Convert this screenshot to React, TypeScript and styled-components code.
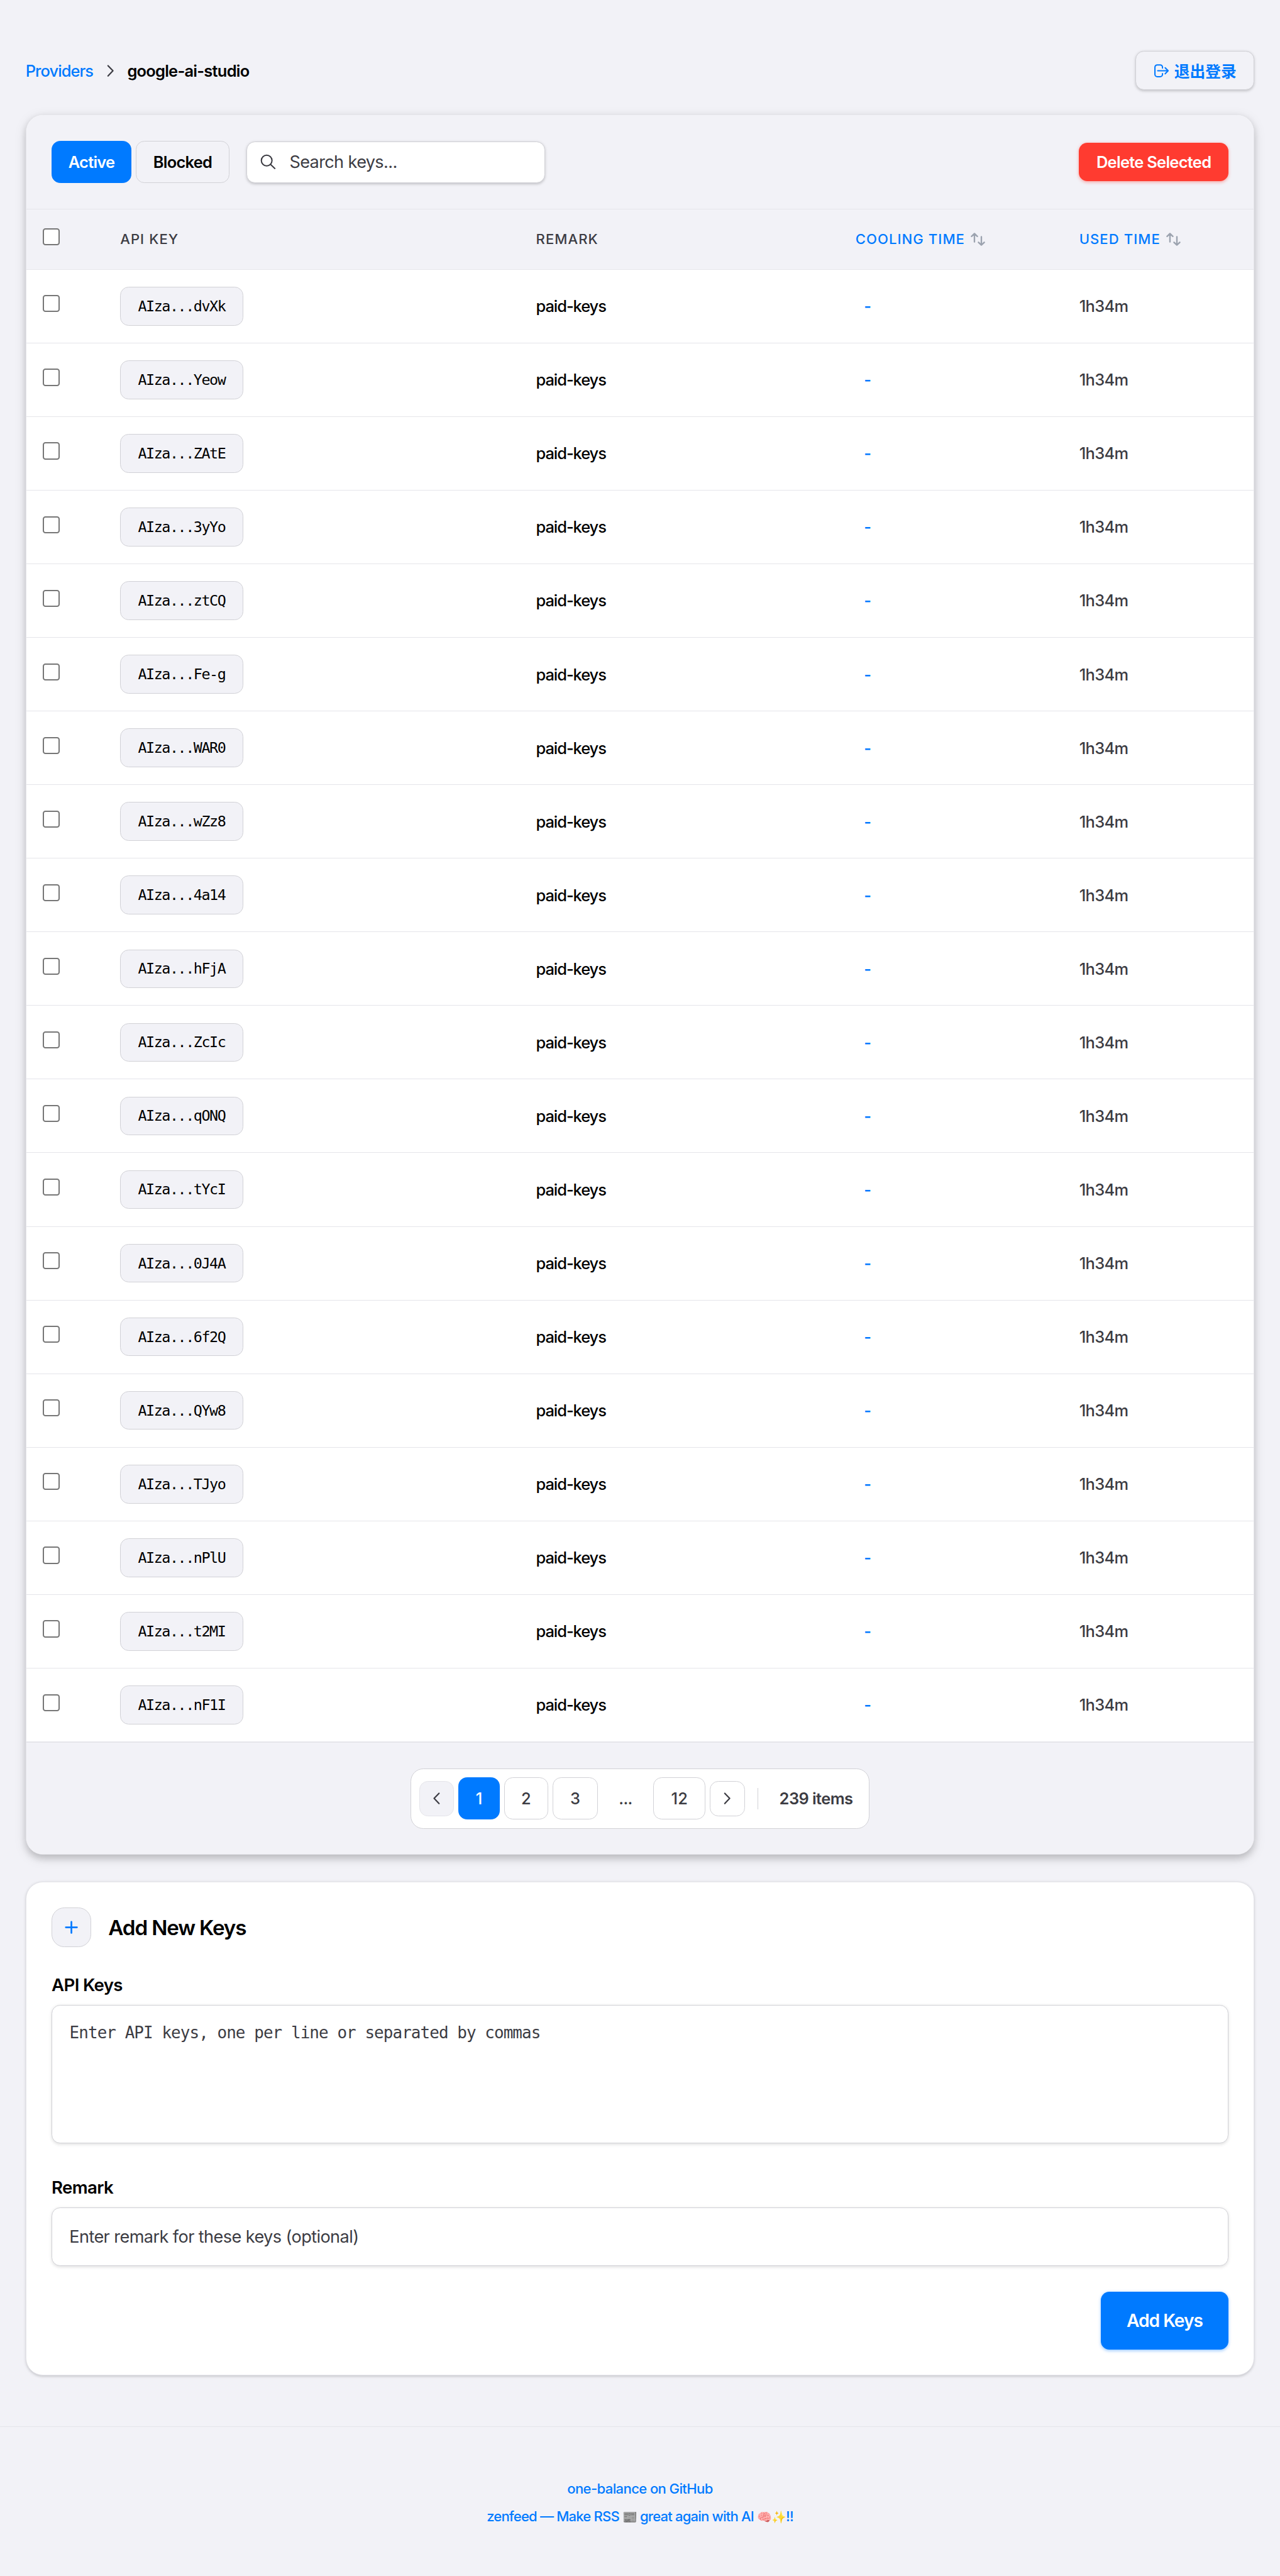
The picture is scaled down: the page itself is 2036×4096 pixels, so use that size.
import React from "react";
import styled, { createGlobalStyle } from "styled-components";

const SCALE = 2036 / 1200;
const u = (n: number) => `${+(n * SCALE).toFixed(3)}px`;

const BLUE = "#007aff";
const BG = "#f2f2f7";
const LINE = "#e5e5ea";
const EDGE = "#d1d1d6";
const GREY = "#3c3c43";
const SANS = `Inter, "Liberation Sans", "Noto Sans CJK SC", "Noto Color Emoji", sans-serif`;
const MONO = `"DejaVu Sans Mono", "Liberation Mono", monospace`;

const GlobalStyle = createGlobalStyle`
  *, *::before, *::after { box-sizing: border-box; }
  body { margin: 0; background: ${BG}; color: #000; font-family: ${SANS}; }
  button, input, textarea { font-family: inherit; margin: 0; }
`;

const Page = styled.div`
  min-height: ${u(2414)};
  display: flex;
  flex-direction: column;
`;

const Main = styled.main`
  padding: ${u(48)} ${u(24)} 0;
`;

const TopBar = styled.header`
  display: flex;
  align-items: center;
  justify-content: space-between;
  height: ${u(36.3)};
  margin-bottom: ${u(23.2)};
`;

const Crumbs = styled.nav`
  display: flex;
  align-items: center;
  gap: ${u(8)};
  font-size: ${u(15)};
  line-height: ${u(22)};
  white-space: nowrap;
`;

const CrumbLink = styled.a`
  color: ${BLUE};
  font-weight: 500;
  letter-spacing: ${u(-0.55)};
`;

const CrumbCurrent = styled.span`
  font-weight: 600;
  letter-spacing: ${u(-0.44)};
`;

const Icon = styled.svg<{ $size: number }>`
  width: ${(p) => u(p.$size)};
  height: ${(p) => u(p.$size)};
  flex: none;
  fill: none;
  stroke: currentColor;
  stroke-linecap: round;
  stroke-linejoin: round;
`;

const LogoutButton = styled.button`
  display: flex;
  align-items: center;
  gap: ${u(4)};
  height: ${u(36.3)};
  width: ${u(111.4)};
  padding: 0 ${u(15.6)};
  border: 1px solid ${EDGE};
  border-radius: ${u(8)};
  background: ${BG};
  color: ${BLUE};
  font-size: ${u(14.6)};
  font-weight: 600;
  white-space: nowrap;
  box-shadow: 0 ${u(1)} ${u(3)} rgba(0, 0, 0, 0.12), 0 ${u(1)} ${u(2)} rgba(0, 0, 0, 0.08);
`;

const Card = styled.section<{ $raised?: boolean }>`
  border: 1px solid ${LINE};
  border-radius: ${u(16)};
  background: #fff;
  overflow: hidden;
  box-shadow: ${(p) =>
    p.$raised
      ? `0 ${u(3)} ${u(6)} rgba(0, 0, 0, 0.16), 0 ${u(3)} ${u(12)} rgba(0, 0, 0, 0.1)`
      : `0 ${u(1)} ${u(3)} rgba(0, 0, 0, 0.12), 0 ${u(1)} ${u(2)} rgba(0, 0, 0, 0.06)`};
`;

const Toolbar = styled.div`
  display: flex;
  align-items: center;
  height: ${u(88.1)};
  padding: 0 ${u(23.8)};
  background: ${BG};
  border-bottom: 1px solid ${LINE};
`;

const Tab = styled.button<{ $active?: boolean; $w: number }>`
  width: ${(p) => u(p.$w)};
  height: ${u(39.5)};
  margin-right: ${u(4)};
  padding: 0;
  border: 1px solid ${(p) => (p.$active ? BLUE : EDGE)};
  border-radius: ${u(8)};
  background: ${(p) => (p.$active ? BLUE : BG)};
  color: ${(p) => (p.$active ? "#fff" : "#000")};
  font-size: ${u(15)};
  font-weight: 600;
  letter-spacing: ${u(-0.42)};
`;

const SearchBox = styled.label`
  display: flex;
  align-items: center;
  width: ${u(280)};
  height: ${u(39)};
  margin-left: ${u(11.8)};
  padding: 0 ${u(12.4)};
  gap: ${u(12.4)};
  color: ${GREY};
  background: #fff;
  border: 1px solid ${EDGE};
  border-radius: ${u(8)};
  box-shadow: 0 ${u(1)} ${u(3)} rgba(0, 0, 0, 0.12), 0 ${u(1)} ${u(2)} rgba(0, 0, 0, 0.08);
`;

const BareInput = styled.input`
  flex: 1;
  min-width: 0;
  padding: 0;
  border: 0;
  outline: 0;
  background: transparent;
  font-size: ${u(16)};
  letter-spacing: ${u(-0.38)};
  &::placeholder { color: ${GREY}; opacity: 1; }
`;

const DeleteButton = styled.button`
  margin-left: auto;
  width: ${u(140)};
  height: ${u(35.6)};
  padding: 0;
  border: 0;
  border-radius: ${u(8)};
  background: #ff3b30;
  color: #fff;
  font-size: ${u(15)};
  font-weight: 600;
  letter-spacing: ${u(-0.42)};
  box-shadow: 0 ${u(1)} ${u(3)} rgba(255, 59, 48, 0.4);
`;

const gridColumns = `${u(72.4)} ${u(389.8)} ${u(299.5)} ${u(209.8)} 1fr`;

const HeadRow = styled.div`
  display: grid;
  grid-template-columns: ${gridColumns};
  align-items: center;
  height: ${u(56.5)};
  padding: 0 ${u(15.7)};
  background: ${BG};
  border-bottom: 1px solid ${LINE};
`;

const HeadCell = styled.div<{ $sortable?: boolean }>`
  display: flex;
  align-items: center;
  gap: ${u(4.4)};
  font-size: ${u(13)};
  font-weight: 500;
  letter-spacing: ${u(0.64)};
  color: ${(p) => (p.$sortable ? BLUE : GREY)};
  white-space: nowrap;
`;

const Row = styled.div`
  display: grid;
  grid-template-columns: ${gridColumns};
  align-items: center;
  height: ${u(69)};
  padding: 0 ${u(15.7)};
  border-bottom: 1px solid ${LINE};
`;

const Check = styled.input`
  appearance: none;
  display: block;
  width: ${u(16)};
  height: ${u(16)};
  margin: 0 0 ${u(4.5)};
  border: 2px solid #767676;
  border-radius: ${u(2.5)};
  background: #fff;
`;

const KeyChip = styled.code`
  display: inline-flex;
  align-items: center;
  justify-content: center;
  width: ${u(115.2)};
  height: ${u(36.3)};
  border: 1px solid ${EDGE};
  border-radius: ${u(8)};
  background: ${BG};
  font-family: ${MONO};
  font-size: ${u(13.8)};
  letter-spacing: ${u(-0.86)};
`;

const Remark = styled.span`
  font-size: ${u(15)};
  font-weight: 500;
  letter-spacing: ${u(-0.62)};
`;

const Cooling = styled.span`
  padding-left: ${u(8)};
  color: ${BLUE};
  font-size: ${u(15)};
  font-weight: 500;
`;

const Used = styled.span`
  color: ${GREY};
  font-size: ${u(15)};
  font-weight: 500;
  letter-spacing: ${u(-0.4)};
`;

const CardFooter = styled.div`
  display: flex;
  align-items: center;
  justify-content: center;
  height: ${u(105.2)};
  background: ${BG};
  border-top: 1px solid ${LINE};
`;

const Pager = styled.div`
  display: flex;
  align-items: center;
  gap: ${u(4.2)};
  width: ${u(430.4)};
  height: ${u(56.4)};
  padding: 0 ${u(7.5)};
  border: 1px solid ${EDGE};
  border-radius: ${u(12)};
  background: #fff;
  color: ${GREY};
  font-size: ${u(15)};
  font-weight: 500;
  letter-spacing: ${u(-0.3)};
`;

const PageButton = styled.button<{ $w: number; $active?: boolean }>`
  width: ${(p) => u(p.$w)};
  height: ${u(39.2)};
  padding: 0;
  border: 1px solid ${(p) => (p.$active ? BLUE : EDGE)};
  border-radius: ${u(8)};
  background: ${(p) => (p.$active ? BLUE : "#fff")};
  color: ${(p) => (p.$active ? "#fff" : GREY)};
  font-size: inherit;
  font-weight: inherit;
`;

const StepButton = styled.button<{ $disabled?: boolean }>`
  display: flex;
  align-items: center;
  justify-content: center;
  width: ${u(32.8)};
  height: ${u(33)};
  padding: 0;
  border: 1px solid ${(p) => (p.$disabled ? LINE : EDGE)};
  border-radius: ${u(8)};
  background: ${(p) => (p.$disabled ? BG : "#fff")};
  color: ${GREY};
`;

const Ellipsis = styled.span`
  width: ${u(44)};
  text-align: center;
`;

const Divider = styled.span`
  width: 1px;
  height: ${u(20)};
  margin: 0 ${u(15.6)} 0 ${u(7.8)};
  background: ${EDGE};
`;

const Total = styled.span`
  white-space: nowrap;
  font-weight: 600;
  letter-spacing: ${u(-0.34)};
`;

const AddCard = styled(Card)`
  margin-top: ${u(24.8)};
  height: ${u(463)};
  padding: ${u(24)} ${u(23.8)};
`;

const AddHead = styled.div`
  display: flex;
  align-items: center;
  gap: ${u(16)};
  height: ${u(37)};
`;

const PlusBadge = styled.span`
  display: flex;
  align-items: center;
  justify-content: center;
  width: ${u(37.2)};
  height: ${u(37)};
  border: 1px solid ${EDGE};
  border-radius: ${u(12)};
  background: ${BG};
  color: ${BLUE};
`;

const Title = styled.h2`
  margin: 0;
  font-size: ${u(19.6)};
  font-weight: 600;
  letter-spacing: ${u(-0.7)};
`;

const Label = styled.label`
  display: block;
  height: ${u(22)};
  line-height: ${u(23)};
  margin-bottom: ${u(8)};
  font-size: ${u(16.3)};
  font-weight: 600;
  letter-spacing: ${u(-0.4)};
`;

const Field = styled.div<{ $top: number }>`
  margin-top: ${(p) => u(p.$top)};
`;

const KeysArea = styled.textarea`
  display: block;
  width: 100%;
  height: ${u(130)};
  padding: ${u(15)} ${u(16.2)};
  border: 1px solid ${EDGE};
  border-radius: ${u(8)};
  background: #fff;
  outline: 0;
  resize: none;
  font-family: ${MONO};
  font-size: ${u(15.3)};
  line-height: ${u(22)};
  letter-spacing: ${u(-0.55)};
  box-shadow: 0 ${u(1)} ${u(3)} rgba(0, 0, 0, 0.12);
  &::placeholder { color: ${GREY}; opacity: 1; }
`;

const RemarkInput = styled.input`
  display: block;
  width: 100%;
  height: ${u(55)};
  padding: 0 ${u(16)};
  border: 1px solid ${EDGE};
  border-radius: ${u(8)};
  background: #fff;
  outline: 0;
  font-size: ${u(16)};
  letter-spacing: ${u(-0.35)};
  box-shadow: 0 ${u(1)} ${u(3)} rgba(0, 0, 0, 0.12);
  &::placeholder { color: ${GREY}; opacity: 1; }
`;

const Actions = styled.div`
  display: flex;
  justify-content: flex-end;
  margin-top: ${u(24)};
`;

const AddButton = styled.button`
  width: ${u(119.6)};
  height: ${u(54.2)};
  padding: 0;
  border: 0;
  border-radius: ${u(8)};
  background: ${BLUE};
  color: #fff;
  font-size: ${u(16.6)};
  font-weight: 600;
  letter-spacing: ${u(-0.6)};
  box-shadow: 0 ${u(1)} ${u(3)} rgba(0, 122, 255, 0.4);
`;

const Footer = styled.footer`
  margin-top: ${u(47.8)};
  padding-top: ${u(44.5)};
  border-top: 1px solid ${LINE};
  display: flex;
  flex-direction: column;
  align-items: center;
`;

const FooterLink = styled.a<{ $tight?: boolean }>`
  color: ${BLUE};
  height: ${u(26.1)};
  font-size: ${u(13)};
  line-height: ${u(26.1)};
  font-weight: 500;
  letter-spacing: ${(p) => u(p.$tight ? -0.48 : -0.36)};
  white-space: nowrap;
`;

const Emoji = styled.span<{ $muted?: boolean }>`
  font-size: ${u(11.3)};
  line-height: 1;
  filter: ${(p) => (p.$muted ? "grayscale(1) brightness(0.72)" : "none")};
`;

const keys = [
  "dvXk", "Yeow", "ZAtE", "3yYo", "ztCQ", "Fe-g", "WAR0", "wZz8", "4a14", "hFjA",
  "ZcIc", "qONQ", "tYcI", "0J4A", "6f2Q", "QYw8", "TJyo", "nPlU", "t2MI", "nF1I",
];

const Chevron = ({ left }: { left?: boolean }) => (
  <Icon $size={16} viewBox="0 0 16 16" strokeWidth={1.3} color={GREY}>
    <path d={left ? "M10.2 3.2 5.6 8l4.6 4.8" : "M5.8 3.2 10.4 8l-4.6 4.8"} />
  </Icon>
);

const SortIcon = () => (
  <Icon $size={16} viewBox="0 0 16 16" strokeWidth={1.4} color="#9ca3af">
    <path d="M4.7 10.3V2.7M2 5.2l2.7-2.6 2.7 2.6M11.2 5.6v7.7M8.5 10.8l2.7 2.6 2.7-2.6" />
  </Icon>
);

export default function App() {
  return (
    <Page>
      <GlobalStyle />
      <Main>
        <TopBar>
          <Crumbs>
            <CrumbLink>Providers</CrumbLink>
            <Chevron />
            <CrumbCurrent>google-ai-studio</CrumbCurrent>
          </Crumbs>
          <LogoutButton>
            <Icon $size={16} viewBox="0 0 16 16" strokeWidth={1.2}>
              <path d="M8.9 5.4v-.7a2.2 2.2 0 0 0-2.2-2.2H4a2.2 2.2 0 0 0-2.2 2.2v6.6A2.2 2.2 0 0 0 4 13.5h2.7a2.2 2.2 0 0 0 2.2-2.2v-.7M4.4 8h9.8M11.4 5.2 14.2 8l-2.8 2.8" />
            </Icon>
            退出登录
          </LogoutButton>
        </TopBar>

        <Card $raised>
          <Toolbar>
            <Tab $active $w={74.8}>Active</Tab>
            <Tab $w={88}>Blocked</Tab>
            <SearchBox>
              <Icon $size={15} viewBox="0 0 15 15" strokeWidth={1.2}>
                <circle cx="6" cy="6" r="5" />
                <path d="m9.7 9.7 4 3.8" />
              </Icon>
              <BareInput placeholder="Search keys..." />
            </SearchBox>
            <DeleteButton>Delete Selected</DeleteButton>
          </Toolbar>
          <HeadRow>
            <Check type="checkbox" />
            <HeadCell>API KEY</HeadCell>
            <HeadCell>REMARK</HeadCell>
            <HeadCell $sortable>COOLING TIME <SortIcon /></HeadCell>
            <HeadCell $sortable>USED TIME <SortIcon /></HeadCell>
          </HeadRow>
          {keys.map((k) => (
            <Row key={k}>
              <Check type="checkbox" />
              <div><KeyChip>AIza...{k}</KeyChip></div>
              <Remark>paid-keys</Remark>
              <Cooling>-</Cooling>
              <Used>1h34m</Used>
            </Row>
          ))}
          <CardFooter>
            <Pager>
              <StepButton $disabled><Chevron left /></StepButton>
              <PageButton $w={38.4} $active>1</PageButton>
              <PageButton $w={41.6}>2</PageButton>
              <PageButton $w={42}>3</PageButton>
              <Ellipsis>...</Ellipsis>
              <PageButton $w={48.6}>12</PageButton>
              <StepButton><Chevron /></StepButton>
              <Divider />
              <Total>239 items</Total>
            </Pager>
          </CardFooter>
        </Card>

        <AddCard>
          <AddHead>
            <PlusBadge>
              <Icon $size={16} viewBox="0 0 16 16" strokeWidth={1.6}>
                <path d="M8 2.8v10.4M2.8 8h10.4" />
              </Icon>
            </PlusBadge>
            <Title>Add New Keys</Title>
          </AddHead>
          <Field $top={24}>
            <Label>API Keys</Label>
            <KeysArea placeholder="Enter API keys, one per line or separated by commas" />
          </Field>
          <Field $top={30}>
            <Label>Remark</Label>
            <RemarkInput placeholder="Enter remark for these keys (optional)" />
          </Field>
          <Actions>
            <AddButton>Add Keys</AddButton>
          </Actions>
        </AddCard>
      </Main>
      <Footer>
        <FooterLink>one-balance on GitHub</FooterLink>
        <FooterLink $tight>
          zenfeed — Make RSS <Emoji $muted>📰</Emoji> great again with AI <Emoji>🧠✨</Emoji>!!
        </FooterLink>
      </Footer>
    </Page>
  );
}
